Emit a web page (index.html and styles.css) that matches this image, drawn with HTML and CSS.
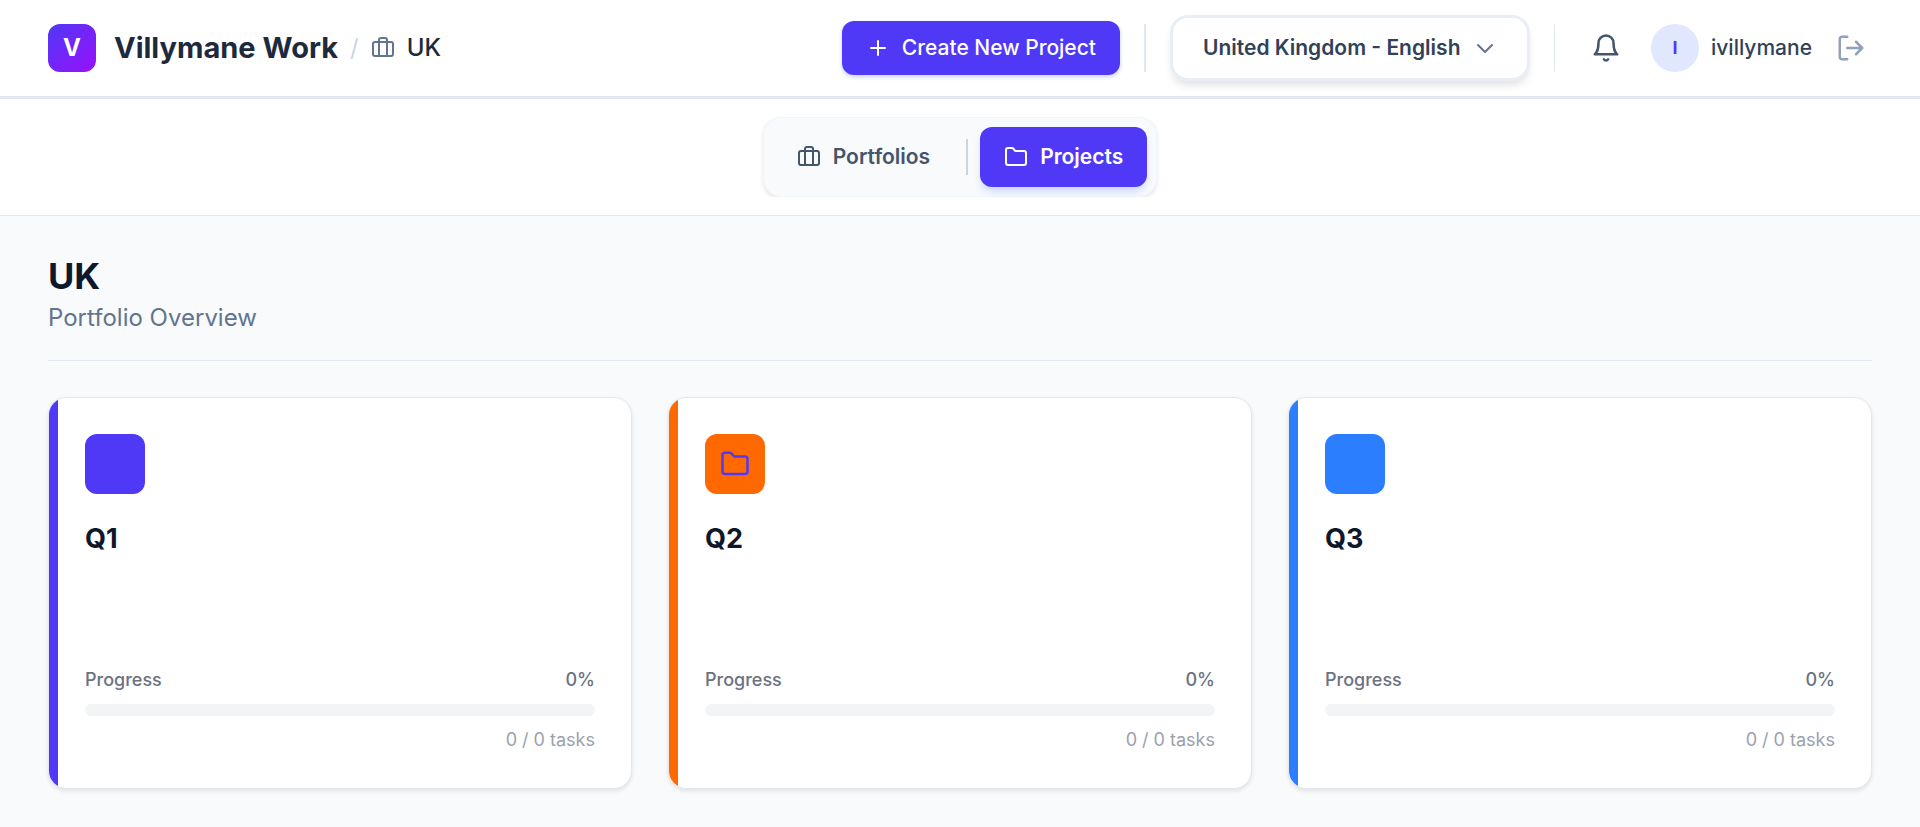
FILE: index.html
```html
<!DOCTYPE html>
<html lang="en">
<head>
    <meta charset="UTF-8">
    <meta name="viewport" content="width=device-width, initial-scale=1.0">
    <title>Villymane Work</title>
    <link rel="stylesheet" href="styles.css">
</head>
<body>

<header class="topbar">
    <div class="brand">
        <div class="logo">V</div>
        <span class="brand-name">Villymane Work</span>
        <span class="slash">/</span>
        <div class="crumb">
            <svg class="icon" viewBox="0 0 24 24"><path d="M16 20V4a2 2 0 0 0-2-2h-4a2 2 0 0 0-2 2v16"/><rect x="2" y="6" width="20" height="14" rx="2"/></svg>
            <span>UK</span>
        </div>
    </div>
    <div class="actions">
        <button class="create-btn" type="button">
            <svg class="icon" viewBox="0 0 24 24"><path d="M5 12h14M12 5v14"/></svg>
            Create New Project
        </button>
        <div class="divider"></div>
        <div class="locale">
            <select class="locale-select" aria-label="Language">
                <option>United Kingdom - English</option>
            </select>
            <svg class="icon locale-arrow" viewBox="0 0 24 24"><path d="m5 9 7 7 7-7"/></svg>
        </div>
        <div class="divider thin"></div>
        <button class="icon-btn bell" type="button" aria-label="Notifications">
            <svg class="icon large" viewBox="0 0 24 24"><path d="M10.3 21a1.94 1.94 0 0 0 3.4 0"/><path d="M6 8a6 6 0 0 1 12 0c0 7 3 9 3 9H3s3-2 3-9"/></svg>
        </button>
        <div class="user">
            <div class="avatar">I</div>
            <span>ivillymane</span>
        </div>
        <button class="icon-btn logout" type="button" aria-label="Log out">
            <svg class="icon large" viewBox="0 0 24 24"><path d="M9 21H5a2 2 0 0 1-2-2V5a2 2 0 0 1 2-2h4"/><path d="m16 17 5-5-5-5M21 12H9"/></svg>
        </button>
    </div>
</header>

<nav class="tabs-bar">
    <div class="tabs-scroll">
        <div class="tabs">
            <a class="tab" href="#portfolios">
                <svg class="icon" viewBox="0 0 24 24"><path d="M16 20V4a2 2 0 0 0-2-2h-4a2 2 0 0 0-2 2v16"/><rect x="2" y="6" width="20" height="14" rx="2"/></svg>
                Portfolios
            </a>
            <div class="tab-divider"></div>
            <a class="tab active" href="#projects">
                <svg class="icon" viewBox="0 0 24 24"><path d="M20 20a2 2 0 0 0 2-2V8a2 2 0 0 0-2-2h-7.9a2 2 0 0 1-1.69-.9L9.6 3.9A2 2 0 0 0 7.93 3H4a2 2 0 0 0-2 2v13a2 2 0 0 0 2 2Z"/></svg>
                Projects
            </a>
        </div>
    </div>
</nav>

<main class="content">
    <div class="page-head">
        <h1>UK</h1>
        <p>Portfolio Overview</p>
    </div>

    <div class="cards">
        <article class="card indigo">
            <div class="card-icon"></div>
            <h2>Q1</h2>
            <div class="progress">
                <div class="progress-row"><span>Progress</span><span>0%</span></div>
                <div class="bar"></div>
                <p class="tasks">0 / 0 tasks</p>
            </div>
        </article>
        <article class="card orange">
            <div class="card-icon">
                <svg class="icon large" viewBox="0 0 24 24"><path d="M20 20a2 2 0 0 0 2-2V8a2 2 0 0 0-2-2h-7.9a2 2 0 0 1-1.69-.9L9.6 3.9A2 2 0 0 0 7.93 3H4a2 2 0 0 0-2 2v13a2 2 0 0 0 2 2Z"/></svg>
            </div>
            <h2>Q2</h2>
            <div class="progress">
                <div class="progress-row"><span>Progress</span><span>0%</span></div>
                <div class="bar"></div>
                <p class="tasks">0 / 0 tasks</p>
            </div>
        </article>
        <article class="card blue">
            <div class="card-icon"></div>
            <h2>Q3</h2>
            <div class="progress">
                <div class="progress-row"><span>Progress</span><span>0%</span></div>
                <div class="bar"></div>
                <p class="tasks">0 / 0 tasks</p>
            </div>
        </article>
    </div>
</main>

</body>
</html>
```
FILE: styles.css
```css
* {
    box-sizing: border-box;
}
body {
    margin: 0;
    font-family: Inter, "Liberation Sans", sans-serif;
    font-size: 21px;
    line-height: 30px;
    color: #0f172b;
    background-color: #f8fafc;
}
h1, h2, p {
    margin: 0;
}
button, select {
    font: inherit;
}
.icon {
    display: block;
    flex: none;
    width: 24px;
    height: 24px;
    fill: none;
    stroke: currentColor;
    stroke-width: 2;
    stroke-linecap: round;
    stroke-linejoin: round;
}
.icon.large {
    width: 30px;
    height: 30px;
}

/* header */
.topbar {
    display: flex;
    align-items: center;
    justify-content: space-between;
    height: 99px;
    padding: 0 48px;
    background-color: #fff;
    border-bottom: 3px solid #e2e8f0;
}
.brand, .crumb, .actions, .user {
    display: flex;
    align-items: center;
}
.brand {
    gap: 12px;
}
.logo {
    display: flex;
    align-items: center;
    justify-content: center;
    width: 48px;
    height: 48px;
    margin-right: 6px;
    border-radius: 12px;
    background: linear-gradient(to bottom right, #4f39f6, #9810fa);
    color: #fff;
    font-size: 24px;
    font-weight: 700;
}
.brand-name {
    font-size: 29px;
    font-weight: 700;
    color: #1d293d;
}
.slash {
    font-size: 24px;
    color: #cad5e2;
}
.crumb {
    gap: 12px;
    font-size: 24px;
    font-weight: 500;
    color: #1d293d;
}
.crumb .icon {
    color: #62748e;
}
.create-btn {
    display: flex;
    align-items: center;
    gap: 12px;
    height: 54px;
    padding: 0 24px;
    border: none;
    border-radius: 12px;
    background-color: #4f39f6;
    color: #fff;
    font-weight: 500;
    box-shadow: 0 2px 4px #c6d2ff;
}
.divider {
    width: 2px;
    height: 48px;
    margin: 0 24px;
    background-color: #e2e8f0;
}
.divider.thin {
    width: 1px;
}
.locale {
    position: relative;
    color: #62748e;
}
.locale-select {
    appearance: none;
    width: 360px;
    height: 66px;
    padding: 0 66px 0 30px;
    border: 3px solid #e9eef5;
    border-radius: 18px;
    background-color: #fff;
    color: #314158;
    font-weight: 600;
    box-shadow: 0 6px 9px -2px rgba(0, 0, 0, 0.12);
}
.locale-arrow {
    position: absolute;
    top: 21px;
    right: 33px;
    pointer-events: none;
}
.icon-btn {
    padding: 6px;
    border: none;
    background: none;
}
.bell {
    margin: 0 24px 0 6px;
    color: #45556c;
}
.user {
    gap: 12px;
    color: #314158;
    font-weight: 500;
}
.avatar {
    display: flex;
    align-items: center;
    justify-content: center;
    width: 48px;
    height: 48px;
    border-radius: 50%;
    background-color: #e0e7ff;
    color: #4f39f6;
    font-size: 18px;
    font-weight: 700;
}
.logout {
    margin-left: 18px;
    color: #90a1b9;
}

/* tabs */
.tabs-bar {
    padding: 18px 48px;
    background-color: #fff;
    border-bottom: 1px solid #e2e8f0;
}
.tabs-scroll {
    display: flex;
    justify-content: center;
    overflow: hidden;
}
.tabs {
    display: flex;
    align-items: center;
    padding: 9px;
    border: 1px solid #f1f5f9;
    border-radius: 18px;
    background-color: #f8fafc;
    box-shadow: 0 2px 4px rgba(0, 0, 0, 0.1);
}
.tab {
    display: flex;
    align-items: center;
    gap: 12px;
    height: 60px;
    padding: 0 24px;
    border-radius: 12px;
    color: #45556c;
    font-weight: 600;
    text-decoration: none;
}
.tab.active {
    background-color: #4f39f6;
    color: #fff;
    box-shadow: 0 6px 9px -2px #c6d2ff;
}
.tab-divider {
    width: 2px;
    height: 36px;
    margin: 0 12px;
    background-color: #cad5e2;
}

/* content */
.content {
    padding: 36px 48px;
}
.page-head {
    padding-bottom: 24px;
    margin-bottom: 36px;
    border-bottom: 1px solid #e2e8f0;
}
.page-head h1 {
    font-size: 36px;
    line-height: 48px;
    font-weight: 700;
}
.page-head p {
    font-size: 24px;
    line-height: 36px;
    color: #62748e;
}
.cards {
    display: grid;
    grid-template-columns: repeat(3, 1fr);
    gap: 36px;
}
.card {
    display: flex;
    flex-direction: column;
    position: relative;
    min-height: 392px;
    padding: 36px;
    overflow: hidden;
    border: 1px solid #e5e7eb;
    border-radius: 18px;
    background-color: #fff;
    box-shadow: 0 2px 4px rgba(0, 0, 0, 0.1);
}
/* coloured stripe on the left edge */
.card::before {
    content: "";
    position: absolute;
    top: 0;
    bottom: 0;
    left: 0;
    width: 9px;
    background-color: var(--accent);
}
.indigo {
    --accent: #4f39f6;
}
.orange {
    --accent: #ff6900;
}
.blue {
    --accent: #2b7fff;
}
.card-icon {
    display: flex;
    align-items: center;
    justify-content: center;
    width: 60px;
    height: 60px;
    margin-bottom: 24px;
    border-radius: 12px;
    background-color: var(--accent);
    color: #4f39f6;
}
.card h2 {
    font-size: 27px;
    line-height: 42px;
    font-weight: 700;
}
.progress {
    margin-top: auto;
    font-size: 18px;
    line-height: 25px;
}
.progress-row {
    display: flex;
    justify-content: space-between;
    margin-bottom: 12px;
    color: #6a7282;
    font-weight: 500;
}
.bar {
    height: 12px;
    margin-bottom: 11px;
    border-radius: 6px;
    background-color: #f3f4f6;
}
.tasks {
    text-align: right;
    color: #99a1af;
}
```
